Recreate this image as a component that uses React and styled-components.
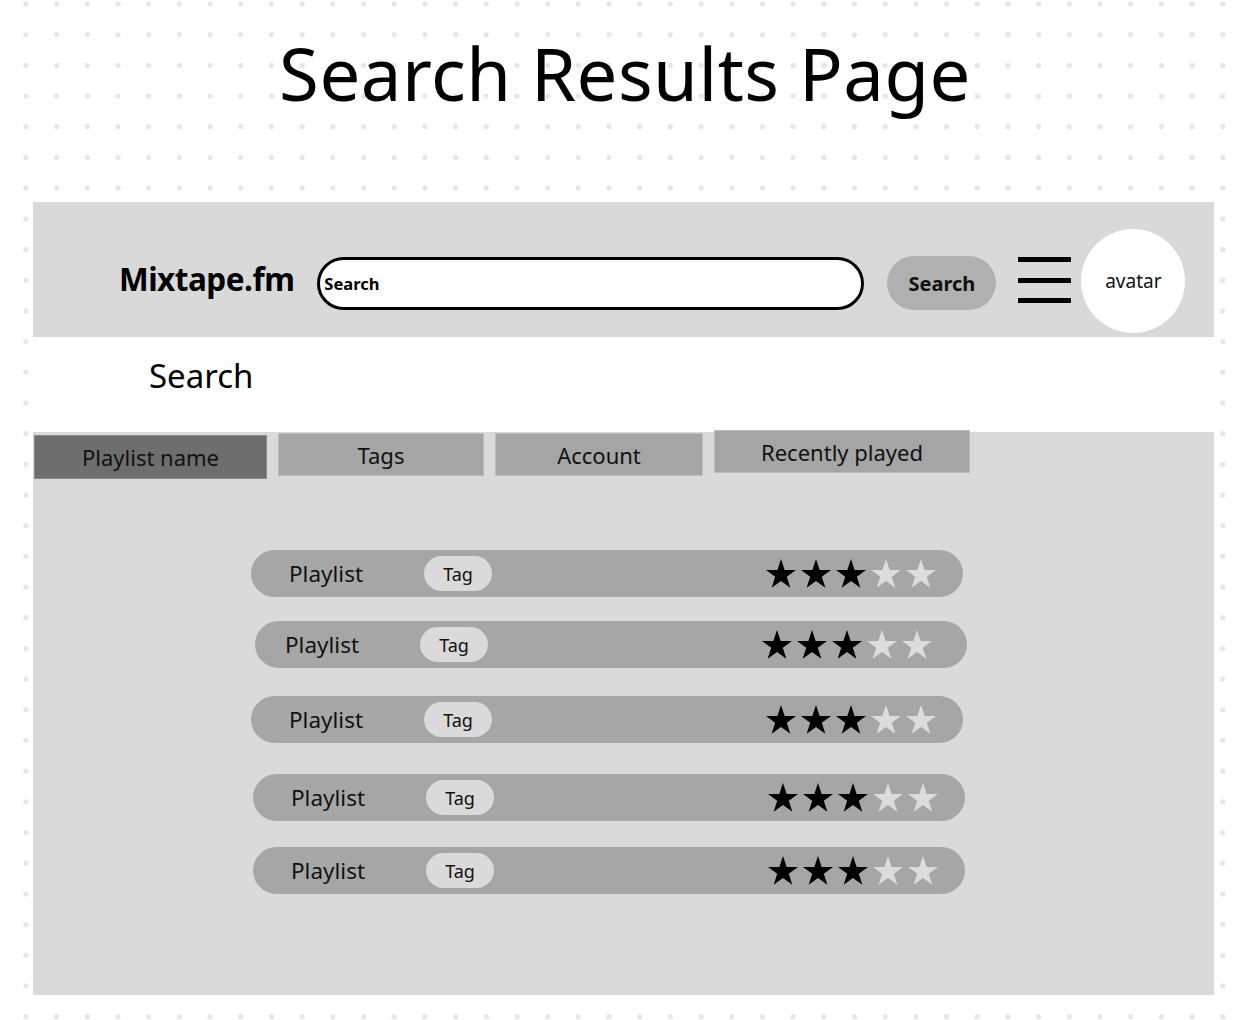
import React from "react";
import styled, { createGlobalStyle } from "styled-components";

const GlobalStyle = createGlobalStyle`
  html, body {
    margin: 0;
    padding: 0;
  }
  body {
    font-family: "Noto Sans", "Open Sans", sans-serif;
    color: #000;
    background-color: #fff;
    background-image: radial-gradient(circle, #e3e6ec 2.3px, transparent 2.9px);
    background-size: 30.7px 30.7px;
    background-position: 10.6px -11.3px;
    min-height: 1020px;
  }
`;

// offset = row shift, shift = content shift inside the row, gap = space above
const rows = [
  { offset: 0, shift: 0, gap: 0 },
  { offset: 4, shift: -8, gap: 24 },
  { offset: 0, shift: 0, gap: 28 },
  { offset: 2, shift: 0, gap: 31 },
  { offset: 2, shift: 0, gap: 26 },
];

const tabs = [
  { label: "Playlist name", width: 233, top: 3, height: 44, active: true },
  { label: "Tags", width: 206, top: 1, height: 43 },
  { label: "Account", width: 208, top: 1, height: 43 },
  { label: "Recently played", width: 256, top: -2, height: 43 },
];

const Page = styled.div`
  width: 1250px;
  height: 1020px;
  display: flex;
  flex-direction: column;
`;

const Title = styled.h1`
  margin: 0;
  height: 202px;
  padding-top: 25px;
  box-sizing: border-box;
  text-align: center;
  font-size: 72.5px;
  font-weight: 400;
  line-height: 96px;
  letter-spacing: 0.5px;
`;

const Panel = styled.div`
  margin-left: 33px;
  width: 1181px;
  height: 793px;
  display: flex;
  flex-direction: column;
`;

const Header = styled.header`
  height: 135px;
  background: #d9d9d9;
  display: flex;
  align-items: center;
  padding-left: 86px;
  padding-top: 28px;
  box-sizing: border-box;
`;

const Logo = styled.div`
  font-size: 31.5px;
  font-weight: 700;
  letter-spacing: -0.5px;
  margin-right: 23px;
  margin-top: -11px;
`;

const SearchField = styled.div`
  width: 547px;
  height: 53px;
  box-sizing: border-box;
  border: 3.5px solid #000;
  border-radius: 27px;
  background: #fff;
  display: flex;
  align-items: center;
  padding-left: 4px;
  font-size: 16.5px;
  font-weight: 700;
`;

const SearchButton = styled.button`
  margin-left: 23px;
  width: 109px;
  height: 54px;
  border: none;
  border-radius: 27px;
  background: #b0b0b0;
  font-family: inherit;
  font-size: 20px;
  font-weight: 700;
  color: #111;
  padding: 0;
  margin-top: -1px;
`;

const Burger = styled.div`
  margin-left: 22px;
  width: 53px;
  height: 46px;
  display: flex;
  flex-direction: column;
  justify-content: space-between;
  margin-top: -7px;
  span {
    display: block;
    height: 5px;
    background: #000;
  }
`;

const Avatar = styled.div`
  margin-left: 10px;
  width: 104px;
  height: 104px;
  border-radius: 50%;
  background: #fff;
  display: flex;
  align-items: center;
  justify-content: center;
  font-size: 19px;
  color: #111;
  margin-top: -5px;
`;

const SubBar = styled.div`
  height: 95px;
  background: #fff;
  padding-left: 116px;
  box-sizing: border-box;
  font-size: 33px;
  line-height: 77px;
`;

const Body = styled.section`
  flex: 1;
  background: #dadada;
  display: flex;
  flex-direction: column;
`;

const TabRow = styled.div`
  display: flex;
  align-items: flex-start;
  gap: 11px;
  height: 47px;
  padding-left: 1px;
`;

const Tab = styled.div`
  width: ${(p) => p.$width}px;
  height: ${(p) => p.$height}px;
  margin-top: ${(p) => p.$top}px;
  box-sizing: border-box;
  background: ${(p) => (p.$active ? "#6e6e6e" : "#a5a5a5")};
  border: 1px solid ${(p) => (p.$active ? "#8a8a8a" : "#bdbdbd")};
  display: flex;
  align-items: center;
  justify-content: center;
  font-size: 22px;
  color: #111;
`;

const List = styled.div`
  display: flex;
  flex-direction: column;
  padding-top: 71px;
`;

const Row = styled.div`
  margin-left: ${(p) => 218 + p.$offset}px;
  margin-top: ${(p) => p.$gap}px;
  width: 712px;
  height: 47px;
  border-radius: 24px;
  background: #a6a6a6;
  display: flex;
  align-items: center;
  padding-left: ${(p) => 38 + p.$shift}px;
  padding-right: ${(p) => 27 - p.$shift}px;
  box-sizing: border-box;
`;

const RowName = styled.span`
  width: 135px;
  font-size: 22.5px;
  color: #111;
  margin-top: -1px;
`;

const TagPill = styled.span`
  width: 68px;
  height: 35px;
  border-radius: 18px;
  background: #dadada;
  display: flex;
  align-items: center;
  justify-content: center;
  font-size: 18px;
  color: #111;
`;

const Stars = styled.div`
  margin-left: auto;
  display: flex;
  gap: 5px;
  margin-top: -1px;
`;

const Star = ({ filled }) => (
  <svg width="30" height="29" viewBox="0.75 0.8 22.5 21.2" preserveAspectRatio="none">
    <path
      d="M12 0.8l2.75 8.05h8.5l-6.9 4.95 2.65 8.1L12 16.9l-7 5 2.65-8.1L0.75 8.85h8.5z"
      fill={filled ? "#000" : "#dcdcdc"}
    />
  </svg>
);

const App = () => {
  return (
    <>
      <GlobalStyle />
      <Page>
        <Title>Search Results Page</Title>
        <Panel>
          <Header>
            <Logo>Mixtape.fm</Logo>
            <SearchField>Search</SearchField>
            <SearchButton>Search</SearchButton>
            <Burger>
              <span />
              <span />
              <span />
            </Burger>
            <Avatar>avatar</Avatar>
          </Header>
          <SubBar>Search</SubBar>
          <Body>
            <TabRow>
              {tabs.map((t) => (
                <Tab
                  key={t.label}
                  $width={t.width}
                  $height={t.height}
                  $top={t.top}
                  $active={t.active}
                >
                  {t.label}
                </Tab>
              ))}
            </TabRow>
            <List>
              {rows.map((r, i) => (
                <Row key={i} $offset={r.offset} $shift={r.shift} $gap={r.gap}>
                  <RowName>Playlist</RowName>
                  <TagPill>Tag</TagPill>
                  <Stars>
                    {[0, 1, 2, 3, 4].map((s) => (
                      <Star key={s} filled={s < 3} />
                    ))}
                  </Stars>
                </Row>
              ))}
            </List>
          </Body>
        </Panel>
      </Page>
    </>
  );
};

export default App;
